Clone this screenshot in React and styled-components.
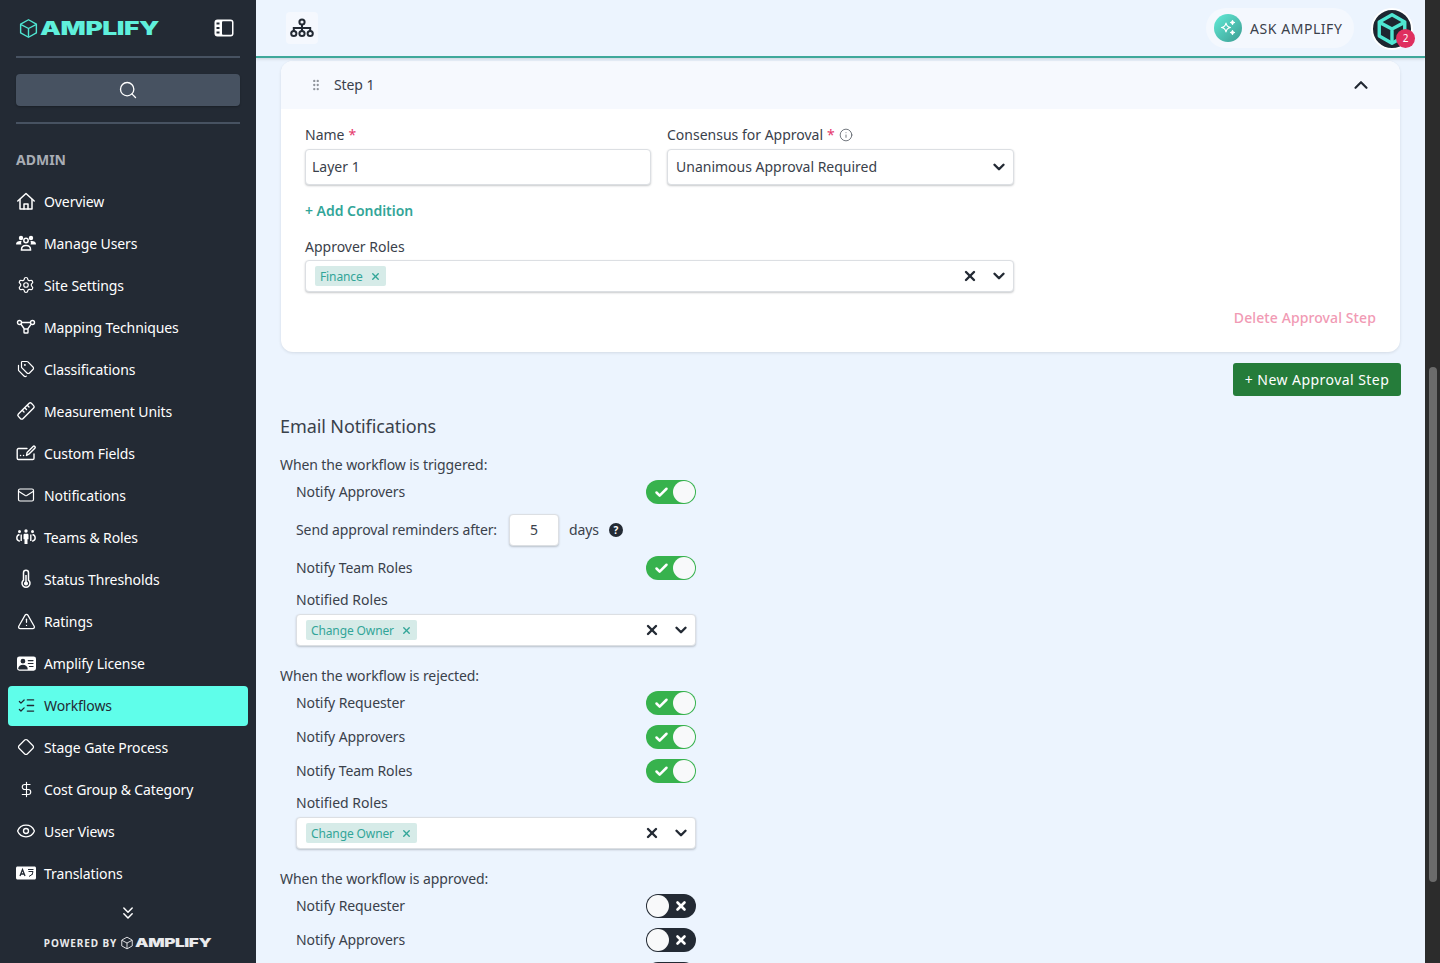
import React from "react";
import styled, { createGlobalStyle } from "styled-components";
import {
  Settings,
  Tags,
  Mail,
  TriangleAlert,
  ListChecks,
  Diamond,
  DollarSign,
  Eye,
  Search,
  ChevronDown,
  ChevronUp,
  ChevronsDown,
  X,
  Check,
  Info,
  GripVertical,
} from "lucide-react";
import { BsPersonVcardFill } from "react-icons/bs";

const GlobalStyle = createGlobalStyle`
  html, body {
    margin: 0;
    height: 100%;
    overflow: hidden;
    font-family: "Noto Sans", "Open Sans", sans-serif;
    background: #ecf4fe;
  }
  * { box-sizing: border-box; }
`;

const Page = styled.div`
  display: flex;
  width: 1440px;
  height: 963px;
  overflow: hidden;
`;

const Sidebar = styled.aside`
  width: 256px;
  flex: none;
  height: 963px;
  background: #232a34;
  display: flex;
  flex-direction: column;
  color: #fff;
`;

const Brand = styled.div`
  height: 56px;
  padding: 0 22px 0 18px;
  display: flex;
  align-items: center;
  justify-content: space-between;
`;

const LogoWrap = styled.div`
  display: flex;
  align-items: center;
  gap: 1px;
  color: ${(p) => p.$color};
`;

const LogoText = styled.span`
  font-family: "Inter", "Liberation Sans", sans-serif;
  font-weight: 900;
  display: inline-block;
  font-size: ${(p) => (p.$small ? "12px" : "19px")};
  line-height: 1;
  width: ${(p) => (p.$small ? "77px" : "118px")};
  transform-origin: left center;
  transform: scaleX(${(p) => (p.$small ? 1.43 : 1.39)});
  letter-spacing: -0.3px;
`;

const Divider = styled.div`
  height: 2px;
  margin: 0 16px;
  background: #475261;
`;

const SearchBox = styled.div`
  height: 32px;
  margin: 16px 16px;
  background: #475261;
  border-radius: 4px;
  display: flex;
  align-items: center;
  justify-content: center;
  box-shadow: 0 1px 2px rgba(0, 0, 0, 0.25);
`;

const SectionTitle = styled.div`
  margin: 26px 16px 12px;
  font-size: 14px;
  line-height: 20px;
  font-weight: 700;
  color: #a9adb4;
`;

const Nav = styled.nav`
  display: flex;
  flex-direction: column;
  gap: 2px;
  padding: 0 8px;
`;

const NavItem = styled.div`
  height: 40px;
  padding: 0 0 2px 8px;
  border-radius: 4px;
  display: flex;
  align-items: center;
  gap: 8px;
  font-size: 14px;
  letter-spacing: -0.1px;
  background: ${(p) => (p.$active ? "#5ffeea" : "transparent")};
  color: ${(p) => (p.$active ? "#232a34" : "#fff")};
`;

const NavIcon = styled.span`
  width: 20px;
  height: 20px;
  flex: none;
  display: flex;
  align-items: center;
  justify-content: center;
`;

const MoreRow = styled.div`
  display: flex;
  justify-content: center;
  margin-top: 9px;
`;

const Powered = styled.div`
  display: flex;
  justify-content: center;
  align-items: center;
  gap: 3px;
  margin-top: 13px;
  font-size: 10px;
  line-height: 14px;
  font-weight: 700;
  letter-spacing: 0.9px;
  color: #e9eaec;
`;

const Main = styled.main`
  flex: 1;
  min-width: 0;
  height: 963px;
  overflow: hidden;
  background: #ecf4fe;
`;

const TopBar = styled.header`
  height: 58px;
  border-bottom: 2px solid #3fa89b;
  box-shadow: 0 1px 3px rgba(35, 42, 52, 0.18);
  display: flex;
  align-items: center;
  justify-content: space-between;
  padding: 0 12px 0 30px;
  position: relative;
`;

const OrgButton = styled.div`
  width: 32px;
  height: 32px;
  border-radius: 4px;
  background: #f5f8fe;
  display: flex;
  align-items: center;
  justify-content: center;
  color: #232a34;
`;

const TopRight = styled.div`
  display: flex;
  align-items: center;
  gap: 17px;
`;

const AskPill = styled.div`
  width: 148px;
  height: 40px;
  border-radius: 20px;
  background: #f4f8fe;
  padding-left: 8px;
  display: flex;
  align-items: center;
  gap: 8px;
  font-size: 14px;
  letter-spacing: 0.55px;
  color: #3a414b;
`;

const AskBadge = styled.span`
  width: 28px;
  height: 28px;
  border-radius: 50%;
  background: linear-gradient(135deg, #62ecd8, #3c9c91);
  display: flex;
  align-items: center;
  justify-content: center;
`;

const Avatar = styled.div`
  width: 42px;
  height: 42px;
  margin-top: 2px;
  border-radius: 50%;
  background: #1e2630;
  border: 2px solid #fff;
  position: relative;
  display: flex;
  align-items: center;
  justify-content: center;
`;

const Badge = styled.span`
  position: absolute;
  right: -4px;
  bottom: 0;
  width: 19px;
  height: 19px;
  border-radius: 50%;
  background: #df2f5f;
  color: #fff;
  font-size: 10px;
  line-height: 19px;
  text-align: center;
`;

const Content = styled.div`
  padding: 3px 24px 0;
  color: #3a414b;
  font-size: 14px;
  line-height: 20px;
  letter-spacing: -0.1px;
`;

const Card = styled.section`
  margin: 0 1px;
  background: #fff;
  border-radius: 12px;
  box-shadow: 0 1px 3px rgba(35, 42, 52, 0.12);
  overflow: hidden;
`;

const CardHead = styled.div`
  height: 48px;
  background: #f6f9fe;
  padding: 0 28px;
  display: flex;
  align-items: center;
  gap: 11px;
`;

const CardTitle = styled.span`
  flex: 1;
`;

const CardBody = styled.div`
  padding: 16px 24px 24px;
`;

const FieldGrid = styled.div`
  display: grid;
  grid-template-columns: 346px 347px;
  column-gap: 16px;
`;

const Label = styled.div`
  display: flex;
  align-items: center;
  gap: 4px;
  letter-spacing: 0;
  margin-bottom: ${(p) => p.$gap ?? 4}px;
  margin-top: ${(p) => p.$top ?? 0}px;
`;

const Required = styled.span`
  color: #e5376b;
`;

const Control = styled.div`
  height: ${(p) => p.$h ?? 36}px;
  background: #fff;
  border-radius: 4px;
  border: 1px solid #dcdfe3;
  box-shadow: 0 1px 2px rgba(35, 42, 52, 0.25);
  display: flex;
  align-items: center;
  padding: 0 5px 0 ${(p) => p.$pl ?? 6}px;
  color: #3a414b;
  letter-spacing: 0;
`;

const ControlText = styled.span`
  flex: 1;
`;

const RolesWrap = styled.div`
  width: 709px;
`;

const Chip = styled.span`
  height: 20px;
  background: #d6ebe8;
  border-radius: 2px;
  padding: 1px 5px 0 5px;
  display: flex;
  align-items: center;
  gap: 7px;
  font-size: 12px;
  letter-spacing: -0.12px;
  color: #32a598;
`;

const ChipSlot = styled.div`
  flex: 1;
  display: flex;
`;

const ClearBox = styled.span`
  display: flex;
  align-items: center;
  gap: 12px;
  color: #232a34;
`;

const AddLink = styled.div`
  margin-top: 16px;
  font-weight: 600;
  letter-spacing: -0.03px;
  color: #32a598;
`;

const DeleteLink = styled.div`
  margin-top: 16px;
  text-align: right;
  font-weight: 500;
  letter-spacing: 0.1px;
  color: #f19ab4;
`;

const ActionRow = styled.div`
  display: flex;
  justify-content: flex-end;
  margin: 11px 0 0;
`;

const GreenButton = styled.button`
  height: 33px;
  width: 168px;
  border: 0;
  border-radius: 3px;
  background: #257c3a;
  color: #fff;
  font: inherit;
  letter-spacing: 0.45px;
`;

const SectionHeading = styled.h2`
  margin: 18px 0 17px;
  font-size: 18px;
  line-height: 24px;
  font-weight: 400;
`;

const GroupTitle = styled.div`
  margin-top: ${(p) => p.$top ?? 0}px;
`;

const Indented = styled.div`
  width: 416px;
  padding-left: 16px;
  display: flex;
  flex-direction: column;
  margin-top: 5px;
`;

const ToggleRow = styled.div`
  height: 24px;
  display: flex;
  align-items: center;
  justify-content: space-between;
  margin-bottom: 10px;
`;

const ReminderRow = styled.div`
  height: 32px;
  display: flex;
  align-items: center;
  margin-bottom: 10px;
`;

const DaysInput = styled.div`
  width: 50px;
  height: 32px;
  margin: 0 10px 0 12px;
  background: #fff;
  border: 1px solid #dcdfe3;
  border-radius: 4px;
  box-shadow: 0 1px 2px rgba(35, 42, 52, 0.25);
  display: flex;
  align-items: center;
  justify-content: center;
`;

const HelpDot = styled.span`
  width: 14px;
  height: 14px;
  margin-left: 10px;
  border-radius: 50%;
  background: #232a34;
  color: #fff;
  font-size: 10px;
  line-height: 14px;
  font-weight: 700;
  text-align: center;
`;

const Switch = styled.span`
  width: 50px;
  height: 24px;
  border-radius: 12px;
  background: ${(p) => (p.$on ? "#37b24d" : "#232a34")};
  display: flex;
  flex-direction: ${(p) => (p.$on ? "row" : "row-reverse")};
  align-items: center;
  justify-content: space-between;
  padding: ${(p) => (p.$on ? "0 1px 0 8px" : "0 8px 0 1px")};
  color: #fff;
`;

const Knob = styled.span`
  width: 22px;
  height: 22px;
  border-radius: 50%;
  background: #f8f9fa;
`;

const Scrollbar = styled.div`
  width: 15px;
  flex: none;
  height: 963px;
  padding: 367px 3px 0 4px;
  background: #2c2c2c;
`;

const Thumb = styled.div`
  height: 515px;
  border-radius: 4px;
  background: #6b6b6b;
`;

const Cube = ({ size, color, width = 1.6 }) => (
  <svg width={size} height={size} viewBox="0 0 24 24" fill="none" stroke={color} strokeWidth={width} strokeLinejoin="round">
    <path d="M12 2 21 7v10l-9 5-9-5V7z" />
    <path d="M3.500 7.500 12 12l8.500-4.500M12 12v9.500" />
  </svg>
);

const SitemapIcon = () => (
  <svg width="24" height="20" viewBox="0 0 24 20" fill="none" stroke="currentColor" strokeWidth="2">
    <circle cx="12" cy="4" r="2.600" />
    <circle cx="3.800" cy="15.500" r="2.600" />
    <circle cx="12" cy="15.500" r="2.600" />
    <circle cx="20.200" cy="15.500" r="2.600" />
    <path d="M12 6.600v6.300M3.800 12.900V10h16.400v2.900" />
  </svg>
);

const HomeIcon = () => (
  <svg width="20" height="20" viewBox="0 0 20 20" fill="none" stroke="#fff" strokeWidth="1.500" strokeLinejoin="round" strokeLinecap="round">
    <path d="M1.800 10 10 2.500 18.200 10" />
    <path d="M4 8.500V18h12V8.500" />
    <path d="M8 18v-5h4v5" />
  </svg>
);

const UsersIcon = () => (
  <svg width="20" height="20" viewBox="0 0 20 20" fill="#fff">
    <circle cx="5" cy="5" r="2.200" />
    <circle cx="15" cy="5" r="2.200" />
    <path d="M0 11c0-2 2-3 4-3h1.600C5 9 5 10.500 5.500 11.500H1c-.6 0-1-.1-1-.5zM20 11c0-2-2-3-4-3h-1.600c.6 1 .6 2.500.1 3.500H19c.6 0 1-.1 1-.5z" />
    <circle cx="10" cy="7.500" r="2.200" fill="none" stroke="#fff" strokeWidth="1.500" />
    <path d="M5.500 16.500c0-2.500 2-4 4.500-4s4.500 1.500 4.500 4v.5h-9z" fill="none" stroke="#fff" strokeWidth="1.500" />
  </svg>
);

const MappingIcon = () => (
  <svg width="20" height="20" viewBox="0 0 20 20" fill="none" stroke="#fff" strokeWidth="1.400">
    <circle cx="3.500" cy="5.500" r="2" />
    <circle cx="16.500" cy="5.500" r="2" />
    <rect x="8" y="12" width="4" height="4" rx=".8" />
    <path d="M5.500 5.500h9M4.800 7l3.600 5M15 7.300l-3.400 4.800" />
  </svg>
);

const RulerIcon = () => (
  <svg width="20" height="20" viewBox="0 0 20 20" fill="none" stroke="#fff" strokeWidth="1.400" strokeLinecap="round">
    <rect x="0.800" y="6.800" width="18.400" height="6.400" rx="1.600" transform="rotate(-45 10 10)" />
    <path d="m6.500 9.500 1.500 1.500M9 7l1.500 1.500M11.500 4.500 13 6" />
  </svg>
);

const CustomFieldsIcon = () => (
  <svg width="20" height="20" viewBox="0 0 20 20" fill="none" stroke="#fff" strokeWidth="1.400" strokeLinecap="round" strokeLinejoin="round">
    <path d="M11 5.500H2.500a1.300 1.300 0 0 0-1.300 1.300v8.400c0 .7.600 1.300 1.300 1.300h14.200c.7 0 1.300-.6 1.300-1.300V11" />
    <path d="m10.500 12.500.6-3 6-6c.5-.5 1.200-.5 1.700 0s.5 1.200 0 1.700l-6 6z" />
    <path d="M4.500 12.500h.1M7.500 12.500h.1" />
  </svg>
);

const TeamsIcon = () => (
  <svg width="20" height="20" viewBox="0 0 20 20" fill="#fff">
    <circle cx="3.500" cy="4.500" r="1.500" />
    <circle cx="10" cy="4" r="1.700" />
    <circle cx="16.500" cy="4.500" r="1.500" />
    <path d="M7.500 8c0-.8.600-1.300 1.300-1.300h2.400c.7 0 1.300.5 1.300 1.300v4.300h-1V17H8.500v-4.700h-1z" />
    <path d="M3.500 7.500C1.800 8 .8 9.500 .8 11s1.200 2.800 3 3.200M16.500 7.500c1.700.5 2.700 2 2.700 3.500s-1.200 2.800-3 3.200" fill="none" stroke="#fff" strokeWidth="1.400" />
    <path d="M5.200 7.500v6.500M14.800 7.500v6.500" stroke="#fff" strokeWidth="1.400" />
  </svg>
);

const ThermoIcon = () => (
  <svg width="20" height="20" viewBox="0 0 20 20" fill="none" stroke="#fff" strokeWidth="1.500">
    <path d="M7.500 3.800a2.500 2.500 0 0 1 5 0v7.300a4 4 0 1 1-5 0z" />
    <path d="M10 6v8" />
    <circle cx="10" cy="14.500" r="1.300" fill="#fff" />
  </svg>
);

const TranslationsIcon = () => (
  <svg width="20" height="20" viewBox="0 0 20 20">
    <path d="M1.500 3.500h17c.8 0 1.500.7 1.500 1.500v10c0 .8-.7 1.500-1.500 1.500h-17C.7 16.500 0 15.800 0 15V5c0-.8.7-1.500 1.500-1.500z" fill="#fff" />
    <path d="M4 13l2.500-6.500L9 13M4.800 11h3.400" fill="none" stroke="#232a34" strokeWidth="1.300" />
    <path d="M12 6.500h5.500M12.500 8.500h4.500l-1 3.500M13 13.500l3-2" fill="none" stroke="#232a34" strokeWidth="1" />
  </svg>
);

const PanelIcon = () => (
  <svg width="20" height="18" viewBox="0 0 20 18">
    <rect x=".5" y=".5" width="19" height="17" rx="3" fill="#fff" />
    <rect x="8" y="2.200" width="10" height="13.600" rx="1" fill="#232a34" />
    <rect x="2.500" y="3.500" width="3" height="2" fill="#232a34" />
    <rect x="2.500" y="8" width="3" height="2" fill="#232a34" />
    <rect x="2.500" y="12.500" width="3" height="2" fill="#232a34" />
  </svg>
);

const Sparkle = () => (
  <svg width="20" height="20" viewBox="0 0 20 20" fill="none" stroke="#fff" strokeWidth="1.200" strokeLinejoin="round">
    <path d="M8 5c.6 3 1.500 4 4.500 4.500C9.500 10 8.600 11 8 14c-.6-3-1.500-4-4.500-4.500C6.500 9 7.400 8 8 5z" />
    <path d="M14.500 2.500c.2 1.200.7 1.700 2 2-1.300.3-1.800.8-2 2-.2-1.200-.7-1.700-2-2 1.300-.3 1.800-.8 2-2zM14.500 12.500c.2 1.200.7 1.700 2 2-1.300.3-1.800.8-2 2-.2-1.200-.7-1.700-2-2 1.300-.3 1.800-.8 2-2z" fill="#fff" />
  </svg>
);

const icon = (Comp, size = 18) => <Comp size={size} strokeWidth={1.6} />;

const navItems = [
  ["Overview", <HomeIcon />],
  ["Manage Users", <UsersIcon />],
  ["Site Settings", icon(Settings)],
  ["Mapping Techniques", <MappingIcon />],
  ["Classifications", icon(Tags)],
  ["Measurement Units", <RulerIcon />],
  ["Custom Fields", <CustomFieldsIcon />],
  ["Notifications", icon(Mail)],
  ["Teams & Roles", <TeamsIcon />],
  ["Status Thresholds", <ThermoIcon />],
  ["Ratings", icon(TriangleAlert, 19)],
  ["Amplify License", <BsPersonVcardFill size={19} />],
  ["Workflows", icon(ListChecks, 19), true],
  ["Stage Gate Process", icon(Diamond, 18)],
  ["Cost Group & Category", icon(DollarSign, 17)],
  ["User Views", icon(Eye, 20)],
  ["Translations", <TranslationsIcon />],
];

const Toggle = ({ on }) => (
  <Switch $on={on}>
    {on ? <Check size={15} strokeWidth={4} /> : <X size={14} strokeWidth={4.5} />}
    <Knob />
  </Switch>
);

const RoleSelect = ({ role }) => (
  <Control $h={32} $pl={9}>
    <ChipSlot>
      <Chip>
        {role}
        <X size={11} strokeWidth={3} />
      </Chip>
    </ChipSlot>
    <ClearBox>
      <X size={16} strokeWidth={3.6} />
      <ChevronDown size={18} strokeWidth={3.2} />
    </ClearBox>
  </Control>
);

export default function App() {
  return (
    <Page>
      <GlobalStyle />
      <Sidebar>
        <Brand>
          <LogoWrap $color="#5ff0dc">
            <Cube size={21} color="#4fe6d2" />
            <LogoText>AMPLIFY</LogoText>
          </LogoWrap>
          <PanelIcon />
        </Brand>
        <Divider />
        <SearchBox>
          <Search size={20} strokeWidth={1.6} color="#fff" />
        </SearchBox>
        <Divider />
        <SectionTitle>ADMIN</SectionTitle>
        <Nav>
          {navItems.map(([label, glyph, active]) => (
            <NavItem key={label} $active={active}>
              <NavIcon>{glyph}</NavIcon>
              {label}
            </NavItem>
          ))}
        </Nav>
        <MoreRow>
          <ChevronsDown size={20} strokeWidth={1.8} color="#fff" />
        </MoreRow>
        <Powered>
          POWERED BY
          <LogoWrap $small $color="#e9eaec">
            <Cube size={14} color="#e9eaec" />
            <LogoText $small>AMPLIFY</LogoText>
          </LogoWrap>
        </Powered>
      </Sidebar>

      <Main>
        <TopBar>
          <OrgButton>
            <SitemapIcon />
          </OrgButton>
          <TopRight>
            <AskPill>
              <AskBadge>
                <Sparkle />
              </AskBadge>
              ASK AMPLIFY
            </AskPill>
            <Avatar>
              <Cube size={34} color="#4fe6d2" width={2.4} />
              <Badge>2</Badge>
            </Avatar>
          </TopRight>
        </TopBar>

        <Content>
          <Card>
            <CardHead>
              <GripVertical size={14} strokeWidth={2} color="#8f949b" />
              <CardTitle>Step 1</CardTitle>
              <ChevronUp size={22} strokeWidth={2.4} color="#232a34" />
            </CardHead>
            <CardBody>
              <FieldGrid>
                <div>
                  <Label>
                    Name <Required>*</Required>
                  </Label>
                  <Control>
                    <ControlText>Layer 1</ControlText>
                  </Control>
                </div>
                <div>
                  <Label>
                    Consensus for Approval <Required>*</Required>
                    <Info size={14} strokeWidth={1.4} color="#555b63" />
                  </Label>
                  <Control $pl={8}>
                    <ControlText>Unanimous Approval Required</ControlText>
                    <ChevronDown size={18} strokeWidth={3.2} color="#232a34" />
                  </Control>
                </div>
              </FieldGrid>
              <AddLink>+ Add Condition</AddLink>
              <Label $top={16} $gap={3}>
                Approver Roles
              </Label>
              <RolesWrap>
                <RoleSelect role="Finance" />
              </RolesWrap>
              <DeleteLink>Delete Approval Step</DeleteLink>
            </CardBody>
          </Card>

          <ActionRow>
            <GreenButton>+ New Approval Step</GreenButton>
          </ActionRow>

          <SectionHeading>Email Notifications</SectionHeading>

          <GroupTitle>When the workflow is triggered:</GroupTitle>
          <Indented>
            <ToggleRow>
              Notify Approvers
              <Toggle on />
            </ToggleRow>
            <ReminderRow>
              Send approval reminders after:
              <DaysInput>5</DaysInput>
              days
              <HelpDot>?</HelpDot>
            </ReminderRow>
            <ToggleRow>
              Notify Team Roles
              <Toggle on />
            </ToggleRow>
            <Label>Notified Roles</Label>
            <RoleSelect role="Change Owner" />
          </Indented>

          <GroupTitle $top={20}>When the workflow is rejected:</GroupTitle>
          <Indented>
            <ToggleRow>
              Notify Requester
              <Toggle on />
            </ToggleRow>
            <ToggleRow>
              Notify Approvers
              <Toggle on />
            </ToggleRow>
            <ToggleRow>
              Notify Team Roles
              <Toggle on />
            </ToggleRow>
            <Label>Notified Roles</Label>
            <RoleSelect role="Change Owner" />
          </Indented>

          <GroupTitle $top={20}>When the workflow is approved:</GroupTitle>
          <Indented>
            <ToggleRow>
              Notify Requester
              <Toggle />
            </ToggleRow>
            <ToggleRow>
              Notify Approvers
              <Toggle />
            </ToggleRow>
            <ToggleRow>
              <span />
              <Toggle />
            </ToggleRow>
          </Indented>
        </Content>
      </Main>
      <Scrollbar>
        <Thumb />
      </Scrollbar>
    </Page>
  );
}
